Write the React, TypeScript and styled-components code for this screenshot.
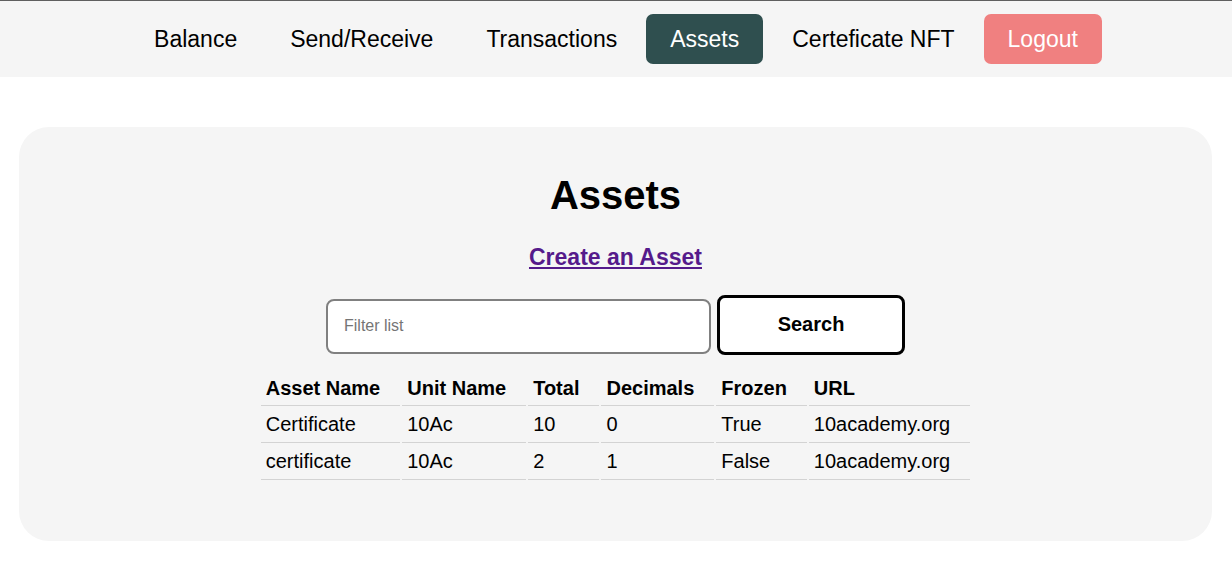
import React from "react";
import styled, { createGlobalStyle, css } from "styled-components";

const GlobalStyle = createGlobalStyle`
  * { box-sizing: border-box; }
  body {
    margin: 0;
    background: #fff;
    color: #000;
    font-family: "Liberation Sans", Arial, sans-serif;
  }
`;

const NavBar = styled.nav`
  display: flex;
  justify-content: center;
  gap: 5px;
  padding: 13px 0;
  border-top: 1px solid #5f5f5f;
  background: whitesmoke;
`;

const NavLink = styled.a<{ $tone?: "active" | "danger" }>`
  padding: 0 24px;
  border-radius: 7px;
  font-size: 23px;
  line-height: 50px;
  color: #000;
  text-decoration: none;
  ${(p) => p.$tone && css`
    color: #fff;
    background: ${p.$tone === "active" ? "darkslategray" : "lightcoral"};
  `}
`;

const Panel = styled.main`
  display: flex;
  flex-direction: column;
  align-items: center;
  margin: 50px 20px 0 19px;
  padding: 44px 0 61px;
  border-radius: 30px;
  background: whitesmoke;
`;

const Title = styled.h1`
  margin: 0 0 24px;
  font-size: 40px;
  line-height: 48px;
`;

const CreateLink = styled.a`
  margin-bottom: 24px;
  color: #551a8b;
  font-size: 23px;
  font-weight: bold;
  line-height: 28px;
`;

const SearchForm = styled.form`
  display: flex;
  align-items: baseline;
  gap: 6px;
  margin-bottom: 14px;
`;

const FilterInput = styled.input`
  width: 385px;
  height: 55px;
  padding: 0 16px 2px;
  border: 2px solid gray;
  border-radius: 8px;
  background: #fff;
  font: 16px "Liberation Sans", Arial, sans-serif;
`;

const SearchButton = styled.button`
  width: 188px;
  height: 60px;
  padding: 0 0 2px;
  border: 3px solid #000;
  border-radius: 8px;
  background: #fff;
  color: #000;
  font: bold 20px "Liberation Sans", Arial, sans-serif;
`;

const Table = styled.table`
  border-spacing: 2px 0;
  font-size: 20px;
  line-height: 26px;
  text-align: left;
`;

const HeadCell = styled.th`
  padding: 6px 20px 4px 5px;
  border-bottom: 1px solid lightgray;
`;

const Cell = styled.td`
  padding: 5px 20px 5px 5px;
  border-bottom: 1px solid lightgray;
`;

const links: { label: string; tone?: "active" | "danger" }[] = [
  { label: "Balance" },
  { label: "Send/Receive" },
  { label: "Transactions" },
  { label: "Assets", tone: "active" },
  { label: "Certeficate NFT" },
  { label: "Logout", tone: "danger" },
];
const columns = ["Asset Name", "Unit Name", "Total", "Decimals", "Frozen", "URL"];
const assets = [
  ["Certificate", "10Ac", "10", "0", "True", "10academy.org"],
  ["certificate", "10Ac", "2", "1", "False", "10academy.org"],
];

export default function App() {
  return (
    <>
      <GlobalStyle />
      <NavBar>
        {links.map((l) => (
          <NavLink key={l.label} href="#" $tone={l.tone}>{l.label}</NavLink>
        ))}
      </NavBar>
      <Panel>
        <Title>Assets</Title>
        <CreateLink href="#">Create an Asset</CreateLink>
        <SearchForm onSubmit={(e) => e.preventDefault()}>
          <FilterInput type="text" placeholder="Filter list" aria-label="Filter list" />
          <SearchButton type="submit">Search</SearchButton>
        </SearchForm>
        <Table>
          <thead>
            <tr>{columns.map((c) => <HeadCell key={c} scope="col">{c}</HeadCell>)}</tr>
          </thead>
          <tbody>
            {assets.map((row) => (
              <tr key={row[0]}>{row.map((v, i) => <Cell key={columns[i]}>{v}</Cell>)}</tr>
            ))}
          </tbody>
        </Table>
      </Panel>
    </>
  );
}
